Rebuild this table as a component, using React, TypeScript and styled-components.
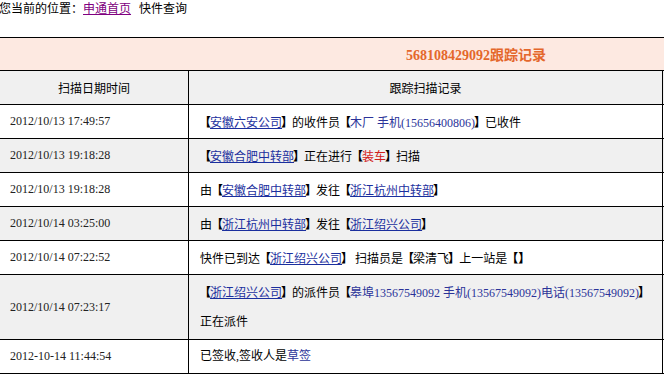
import React from 'react';
import styled, { createGlobalStyle } from 'styled-components';

const GlobalStyle = createGlobalStyle`
  html, body {
    margin: 0;
    padding: 0;
    background: #fff;
  }
  body {
    font-family: 'Liberation Serif', 'Noto Sans CJK SC', serif;
    font-size: 12px;
    color: #000;
  }
`;

const B = styled.b`
  font-family: 'Noto Sans CJK SC', sans-serif;
  font-weight: 900;
  margin: 0 -1px;
`;

const Link = styled.a`
  color: #1b2f9e;
  text-decoration: underline;
`;

const Phone = styled.span`
  color: #2b3399;
`;

const Red = styled.span`
  color: #d0201a;
`;

type Row = {
  time: string;
  lines: React.ReactNode[];
};

const rows: Row[] = [
  {
    time: '2012/10/13 17:49:57',
    lines: [
      <>
        <B>【</B>
        <Link href="#">安徽六安公司</Link>
        <B>】</B>的收件员<B>【</B>
        <Phone>木厂 手机(15656400806)</Phone>
        <B>】</B>已收件
      </>,
    ],
  },
  {
    time: '2012/10/13 19:18:28',
    lines: [
      <>
        <B>【</B>
        <Link href="#">安徽合肥中转部</Link>
        <B>】</B>正在进行<B>【</B>
        <Red>装车</Red>
        <B>】</B>扫描
      </>,
    ],
  },
  {
    time: '2012/10/13 19:18:28',
    lines: [
      <>
        由<B>【</B>
        <Link href="#">安徽合肥中转部</Link>
        <B>】</B>发往<B>【</B>
        <Link href="#">浙江杭州中转部</Link>
        <B>】</B>
      </>,
    ],
  },
  {
    time: '2012/10/14 03:25:00',
    lines: [
      <>
        由<B>【</B>
        <Link href="#">浙江杭州中转部</Link>
        <B>】</B>发往<B>【</B>
        <Link href="#">浙江绍兴公司</Link>
        <B>】</B>
      </>,
    ],
  },
  {
    time: '2012/10/14 07:22:52',
    lines: [
      <>
        快件已到达<B>【</B>
        <Link href="#">浙江绍兴公司</Link>
        <B>】</B> 扫描员是<B>【</B>梁清飞<B>】</B>上一站是<B>【】</B>
      </>,
    ],
  },
  {
    time: '2012/10/14 07:23:17',
    lines: [
      <>
        <B>【</B>
        <Link href="#">浙江绍兴公司</Link>
        <B>】</B>的派件员<B>【</B>
        <Phone>皋埠13567549092 手机(13567549092)电话(13567549092)</Phone>
        <B>】</B>
      </>,
      <>正在派件</>,
    ],
  },
  {
    time: '2012-10-14 11:44:54',
    lines: [
      <>
        已签收,签收人是<Phone>草签</Phone>
      </>,
    ],
  },
];

const Page = styled.div`
  width: 664px;
  height: 380px;
  overflow: hidden;
  background: #fff;
`;

const Crumbs = styled.div`
  height: 16px;
  line-height: 16px;
  margin-left: -1px;
  font-family: 'Noto Sans CJK SC', sans-serif;
  font-size: 12px;
  color: #000;
  white-space: nowrap;
`;

const CrumbLink = styled.a`
  color: #800080;
  text-decoration: underline;
`;

const Current = styled.span`
  margin-left: 8px;
`;

const TableWrap = styled.div`
  margin-top: 21px;
  margin-left: -1px;
  width: 960px;
`;

const Track = styled.table`
  width: 954px;
  border-collapse: collapse;
  table-layout: fixed;
  font-size: 12px;

  td {
    border: 1px solid #000;
  }
`;

const TitleCell = styled.td`
  height: 32px;
  padding: 0;
  background: #fde9e1;
  text-align: center;
  color: #e4672b;
  font-size: 14px;
  font-weight: bold;
  font-family: 'Liberation Serif', 'Noto Sans CJK SC', serif;
  && {
    border-left: none;
    border-right: none;
  }
`;

const HeadCell = styled.td`
  height: 33px;
  padding: 0;
  background: #f0f0f0;
  text-align: center;
  font-family: 'Noto Sans CJK SC', sans-serif;
  color: #000;
`;

const BodyRow = styled.tr<{ $shaded: boolean }>`
  background: ${(p) => (p.$shaded ? '#f0f0f0' : '#fff')};
`;

const TimeCell = styled.td`
  padding: 1px 0 1px 10px;
  line-height: 31px;
  color: #222;
  font-family: 'Liberation Serif', serif;
  white-space: nowrap;
`;

const InfoCell = styled.td`
  padding: 1px 0 1px 11px;
  line-height: 31px;
  color: #000;
  font-family: 'Liberation Serif', 'Noto Sans CJK SC', serif;
  white-space: nowrap;
`;

const Line = styled.div`
  height: 31px;
`;

const App = () => {
  return (
    <Page>
      <GlobalStyle />
      <Crumbs>
        您当前的位置：<CrumbLink href="#">申通首页</CrumbLink>
        <Current>快件查询</Current>
      </Crumbs>
      <TableWrap>
        <Track>
          <colgroup>
            <col style={{ width: 189 }} />
            <col style={{ width: 474 }} />
            <col />
          </colgroup>
          <tbody>
            <tr>
              <TitleCell colSpan={3}>568108429092跟踪记录</TitleCell>
            </tr>
            <tr>
              <HeadCell>扫描日期时间</HeadCell>
              <HeadCell>跟踪扫描记录</HeadCell>
              <HeadCell />
            </tr>
            {rows.map((r, i) => (
              <BodyRow key={i} $shaded={i % 2 === 1}>
                <TimeCell>{r.time}</TimeCell>
                <InfoCell>
                  {r.lines.map((l, j) => (
                    <Line key={j}>{l}</Line>
                  ))}
                </InfoCell>
                <InfoCell />
              </BodyRow>
            ))}
          </tbody>
        </Track>
      </TableWrap>
    </Page>
  );
};

export default App;
